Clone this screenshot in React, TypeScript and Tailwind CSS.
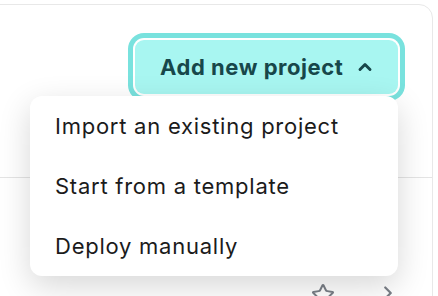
import React from 'react';
import { ChevronUp, ChevronRight, Star } from 'lucide-react';

const MENU_ITEMS = ['Import an existing project', 'Start from a template', 'Deploy manually'];

const App: React.FC = () => {
  return (
    <div className="h-[296px] w-[438px] overflow-hidden bg-white pt-[4px] pr-[5px]" style={{ fontFamily: 'Inter, "Noto Sans", sans-serif' }}>
      {/* Card */}
      <div className="-ml-[12px] h-[320px] rounded-tr-[14px] border border-[#e8e8e8] bg-white">
        {/* Header */}
        <div className="flex h-[172px] justify-end pt-[35px] pr-[34px]">
          <div className="relative h-[54px]">
            <button className="flex h-[54px] w-[263px] items-center gap-[12px] rounded-[9px] bg-[#a8f6f1] pl-[25px] text-[22px] font-bold tracking-[0.55px] text-[#17474a] ring-[5px] ring-[#79e2de] ring-offset-2 ring-offset-white">
              Add new project
              <ChevronUp className="h-[20px] w-[20px]" strokeWidth={3.5} />
            </button>

            {/* Dropdown */}
            <div className="absolute right-0 top-[56px] z-10 w-[368px] rounded-[12px] bg-white shadow-[0_10px_32px_rgba(0,0,0,0.16)]">
              {MENU_ITEMS.map((item) => (
                <div key={item} className="flex h-[60px] items-center pl-[25px] text-[22px] tracking-[0.75px] text-[#1b1b1b]">
                  {item}
                </div>
              ))}
            </div>
          </div>
        </div>

        {/* Divider */}
        <div className="h-px bg-[#e4e4e4]" />

        {/* Row */}
        <div className="flex items-start justify-end gap-[42px] pt-[105px] pr-[33px] text-[#7a7f87]">
          <Star className="h-[24px] w-[24px]" strokeWidth={2} />
          <ChevronRight className="-mt-[1px] h-[22px] w-[22px]" strokeWidth={2.4} />
        </div>
      </div>
    </div>
  );
};

export default App;
